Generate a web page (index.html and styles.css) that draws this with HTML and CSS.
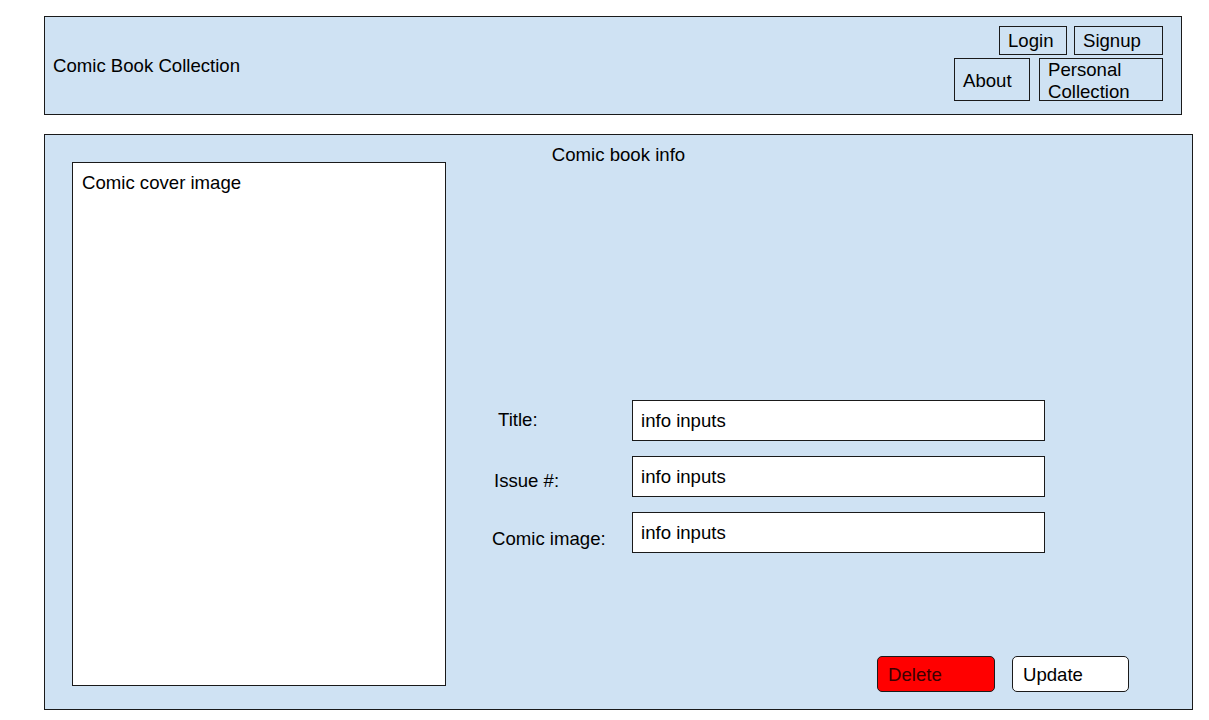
FILE: index.html
```html
<!DOCTYPE html>
<html lang="en">
<head>
<meta charset="utf-8">
<title>Comic Book Collection</title>
<link rel="stylesheet" href="styles.css">
</head>
<body>
<header class="site-header">
  <div class="site-title">Comic Book Collection</div>
  <nav class="nav">
    <div class="nav-row nav-row-top">
      <a class="nav-btn btn-login" href="#">Login</a>
      <a class="nav-btn btn-signup" href="#">Signup</a>
    </div>
    <div class="nav-row nav-row-bottom">
      <a class="nav-btn btn-about" href="#">About</a>
      <a class="nav-btn btn-personal" href="#">Personal<br>Collection</a>
    </div>
  </nav>
</header>
<main class="panel">
  <div class="panel-title">Comic book info</div>
  <div class="panel-content">
    <div class="cover">Comic cover image</div>
    <div class="details">
      <div class="form">
        <label class="label label-title">Title:</label>
        <div class="input">info inputs</div>
        <label class="label label-issue">Issue #:</label>
        <div class="input">info inputs</div>
        <label class="label label-image">Comic image:</label>
        <div class="input">info inputs</div>
      </div>
      <div class="actions">
        <button class="action action-delete">Delete</button>
        <button class="action action-update">Update</button>
      </div>
    </div>
  </div>
</main>
</body>
</html>
```

FILE: styles.css
```css
* {
  box-sizing: border-box;
}

html, body {
  margin: 0;
  padding: 0;
  background: #ffffff;
}

body {
  font-family: "Liberation Sans", Arial, sans-serif;
  font-size: 18.6px;
  color: #000000;
  padding: 16px 0 0 44px;
}

.site-header {
  width: 1138px;
  height: 99px;
  background: #cfe2f3;
  border: 1px solid #1a1a1a;
  display: flex;
  align-items: center;
  justify-content: space-between;
  padding: 0 18px 0 8px;
}

.site-title {
  line-height: 22px;
  margin-top: 1px;
}

.nav {
  display: flex;
  flex-direction: column;
  align-items: flex-end;
  gap: 3px;
  align-self: flex-start;
  padding-top: 9px;
}

.nav-row {
  display: flex;
}

.nav-row-top {
  gap: 7px;
}

.nav-row-bottom {
  gap: 9px;
}

.nav-btn {
  display: flex;
  align-items: center;
  border: 1px solid #1a1a1a;
  color: #000000;
  text-decoration: none;
  padding: 1px 0 0 8px;
  line-height: 22px;
}

.btn-login {
  width: 68px;
  height: 29px;
}

.btn-signup {
  width: 89px;
  height: 29px;
}

.btn-about {
  width: 76px;
  height: 43px;
  padding-top: 2px;
}

.btn-personal {
  width: 124px;
  height: 43px;
  padding-top: 2px;
}

.panel {
  width: 1149px;
  height: 576px;
  margin-top: 19px;
  background: #cfe2f3;
  border: 1px solid #1a1a1a;
  display: flex;
  flex-direction: column;
}

.panel-title {
  text-align: center;
  line-height: 20px;
  margin-top: 10px;
}

.panel-content {
  display: flex;
  align-items: flex-start;
  margin-top: -3px;
  padding-left: 27px;
}

.cover {
  width: 374px;
  height: 524px;
  background: #ffffff;
  border: 1px solid #1a1a1a;
  padding: 9px 0 0 9px;
  line-height: 22px;
  flex-shrink: 0;
}

.details {
  flex: 1;
  display: flex;
  flex-direction: column;
  margin-left: 46px;
  padding-top: 238px;
  padding-right: 63px;
}

.form {
  display: grid;
  grid-template-columns: 140px 413px;
  grid-auto-rows: 41px;
  row-gap: 15px;
}

.label {
  line-height: 22px;
}

.label-title {
  padding: 9px 0 0 6px;
}

.label-issue {
  padding: 14px 0 0 2px;
}

.label-image {
  padding: 16px 0 0 0;
}

.input {
  background: #ffffff;
  border: 1px solid #1a1a1a;
  padding: 9px 8px 0 8px;
  line-height: 22px;
}

.actions {
  display: flex;
  justify-content: flex-end;
  gap: 17px;
  margin-top: 103px;
}

.action {
  height: 36px;
  font-family: inherit;
  font-size: inherit;
  line-height: 22px;
  text-align: left;
  padding: 1px 0 0 10px;
  border: 1px solid #1a1a1a;
  border-radius: 5px;
  cursor: pointer;
}

.action-delete {
  width: 118px;
  background: #ff0000;
  color: #3a0000;
}

.action-update {
  width: 117px;
  background: #ffffff;
  color: #000000;
}
```
